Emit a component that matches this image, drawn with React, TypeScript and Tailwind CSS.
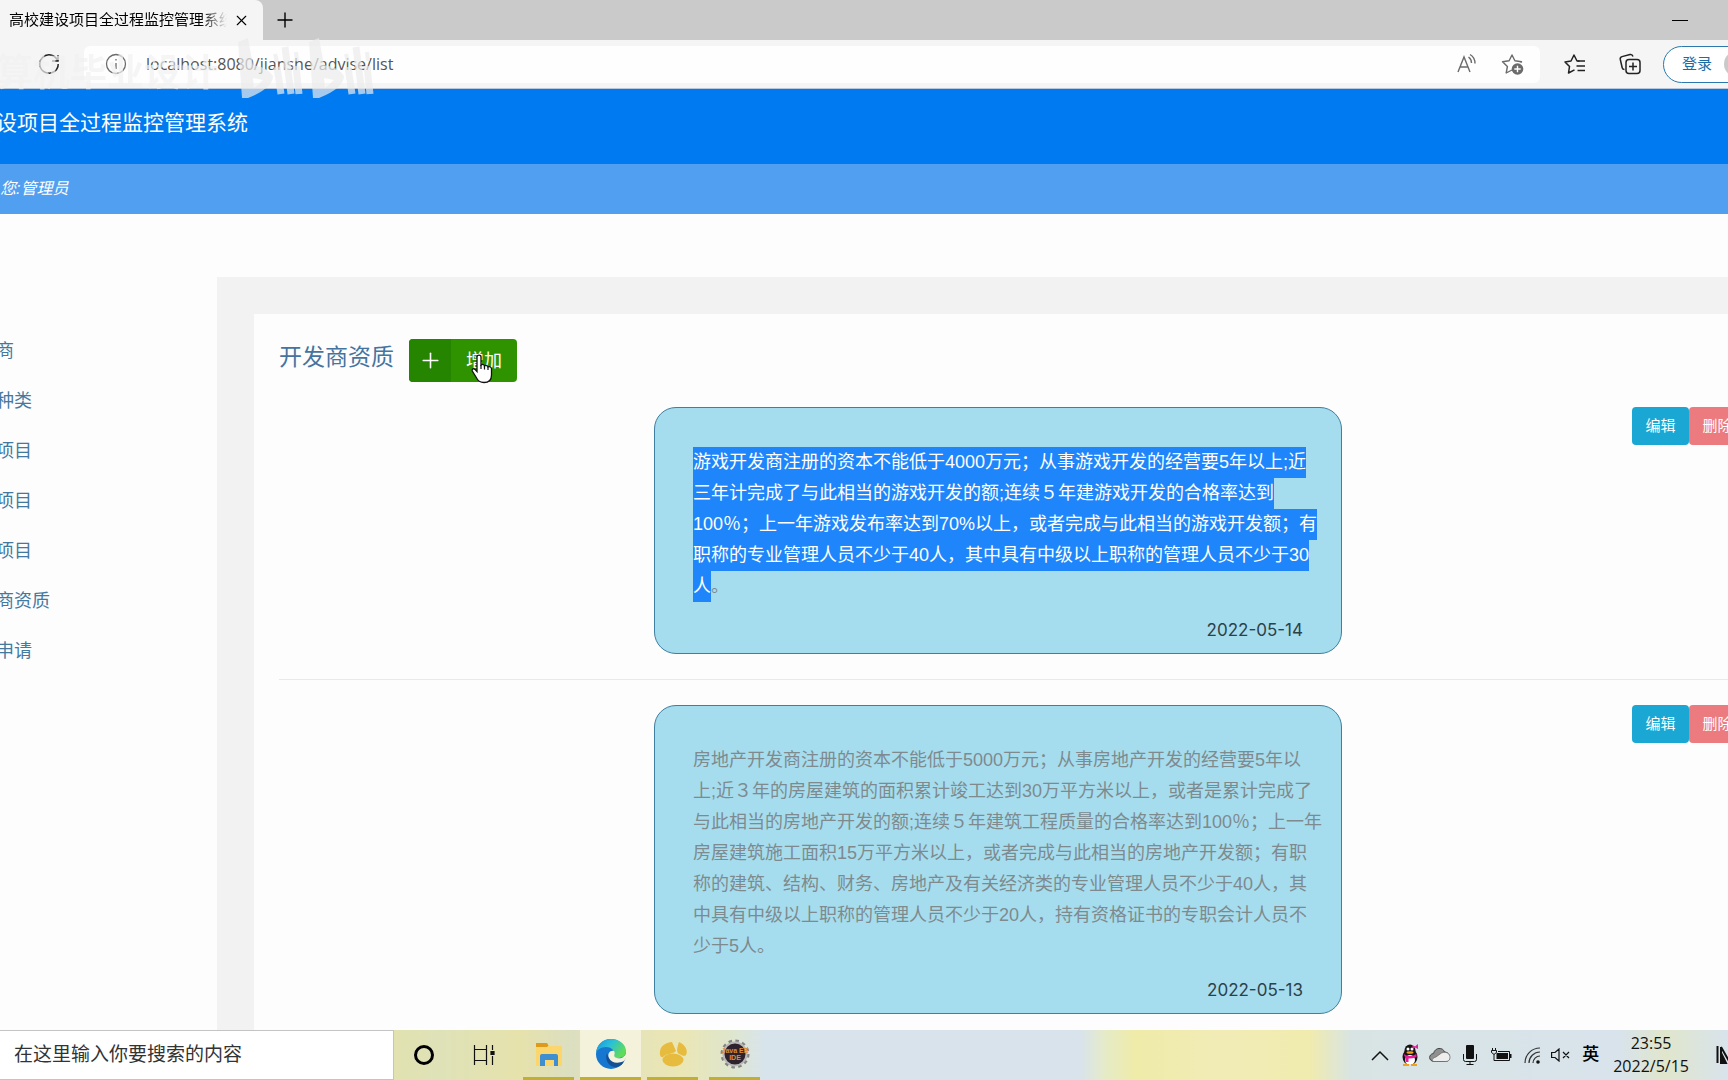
import { Plus, X } from 'lucide-react';

type Advice = {
  date: string;
  lines: string[];
  tail?: string;
  selected?: boolean;
};

const menu = ['商', '种类', '项目', '项目', '项目', '商资质', '申请'];

const advices: Advice[] = [
  {
    date: '2022-05-14',
    selected: true,
    lines: [
      '游戏开发商注册的资本不能低于4000万元；从事游戏开发的经营要5年以上;近',
      '三年计完成了与此相当的游戏开发的额;连续５年建游戏开发的合格率达到',
      '100％；上一年游戏发布率达到70%以上，或者完成与此相当的游戏开发额；有',
      '职称的专业管理人员不少于40人，其中具有中级以上职称的管理人员不少于30',
      '人',
    ],
    tail: '。',
  },
  {
    date: '2022-05-13',
    lines: [
      '房地产开发商注册的资本不能低于5000万元；从事房地产开发的经营要5年以',
      '上;近３年的房屋建筑的面积累计竣工达到30万平方米以上，或者是累计完成了',
      '与此相当的房地产开发的额;连续５年建筑工程质量的合格率达到100％；上一年',
      '房屋建筑施工面积15万平方米以上，或者完成与此相当的房地产开发额；有职',
      '称的建筑、结构、财务、房地产及有关经济类的专业管理人员不少于40人，其',
      '中具有中级以上职称的管理人员不少于20人，持有资格证书的专职会计人员不',
      '少于5人。',
    ],
  },
];

function TabStrip() {
  return (
    <div className="flex h-10 shrink-0 items-center bg-[#cacaca]">
      <div className="flex h-full w-[263px] items-center rounded-tr-lg bg-[#f5f5f5] pl-[9px]">
        <span className="w-[218px] overflow-hidden whitespace-nowrap bg-linear-to-r from-black from-88% to-transparent bg-clip-text text-[15px] text-transparent">
          高校建设项目全过程监控管理系统
        </span>
        <button aria-label="关闭标签页" className="ml-1.5 text-black">
          <X size={17} strokeWidth={1.6} />
        </button>
      </div>
      <button aria-label="新建标签页" className="ml-2.5 text-black">
        <Plus size={24} strokeWidth={1.4} />
      </button>
      <button aria-label="最小化" className="mr-10 ml-auto flex h-6 w-4 items-center">
        <span className="h-px w-full bg-black" />
      </button>
    </div>
  );
}

function Toolbar() {
  return (
    <div className="flex h-[49px] shrink-0 items-center overflow-hidden border-b border-[#b9c8dc] bg-[#f5f5f5]">
      <button aria-label="刷新" className="ml-[38px]">
        <svg width="22" height="22" viewBox="0 0 22 22" fill="none" stroke="#222" strokeWidth="1.5">
          <path d="M19.5 7.5A9.2 9.2 0 1 0 20.2 11" />
          <path d="M20 2v6h-6" />
        </svg>
      </button>
      <div className="ml-6 flex h-[37px] flex-1 items-center rounded-md bg-[#fefefe] pr-4 pl-[21px] text-[#6b6b6b]">
        <svg width="22" height="22" viewBox="0 0 22 22" fill="none" stroke="currentColor" strokeWidth="1.3">
          <circle cx="11" cy="11" r="9.5" />
          <path d="M11 10v6M11 6v1.6" />
        </svg>
        <input
          aria-label="地址栏"
          defaultValue="localhost:8080/jianshe/advise/list"
          className="ml-[19px] min-w-0 flex-1 bg-transparent font-['Open_Sans','Noto_Sans',sans-serif] text-base text-[#555] outline-none"
        />
        <button aria-label="大声朗读" className="mr-[22px]">
          <svg width="22" height="22" viewBox="0 0 22 22" fill="none" stroke="currentColor" strokeWidth="1.4">
            <path d="M2 19L8 4l6 15M4.200 14h7.600" />
            <path d="M12.500 4c2 1.500 3 3.500 3 6M14 1.500c3.500 2 5 5 5 9" />
          </svg>
        </button>
        <button aria-label="添加收藏">
          <svg width="24" height="24" viewBox="0 0 24 24" fill="none" stroke="currentColor" strokeWidth="1.4">
            <path d="M12 18l-5.800 3 1.200-6.500L2.500 9.800l6.600-1L12 3l2.900 5.800 6.600 1-1 1" strokeLinejoin="round" />
            <circle cx="17.500" cy="17" r="5.800" fill="#6b6b6b" stroke="none" />
            <path d="M17.500 13.800v6.400M14.300 17h6.400" stroke="#fff" />
          </svg>
        </button>
      </div>
      <div className="flex items-center text-[#222]">
        <button aria-label="收藏夹" className="ml-[23px]">
          <svg width="24" height="24" viewBox="0 0 24 24" fill="none" stroke="currentColor" strokeWidth="1.500" strokeLinejoin="round">
            <path d="M16.500 9H14l-3-6-3 6-6 .9 4.500 4.600L5.500 21l6-3.200" />
            <path d="M14.500 9H22M13.500 14H22M14.500 18.500H22" />
          </svg>
        </button>
        <button aria-label="集锦" className="ml-[31px]">
          <svg width="24" height="24" viewBox="0 0 24 24" fill="none" stroke="currentColor" strokeWidth="1.500">
            <path d="M6.500 17.500c-1.500 0-2-.6-2.300-1.800L2.300 7.500c-.3-1.500.3-2.500 1.700-2.900l8-2c1.600-.3 2.500.3 3 1.900" />
            <rect x="8" y="7.500" width="14" height="14" rx="3" />
            <path d="M15 10.500v8M11 14.500h8" />
          </svg>
        </button>
        <button className="-mr-5 ml-[21px] flex h-[37px] w-[85px] items-center rounded-full border border-[#2a78ad] bg-white pl-[18px] text-[15px] whitespace-nowrap text-[#1b6ba5]">
          登录
          <span className="ml-3 size-[26px] shrink-0 rounded-full bg-[#c9c9c9]" />
        </button>
      </div>
    </div>
  );
}

function Watermark() {
  return (
    <div className="pointer-events-none absolute top-[38px] left-0 flex opacity-70">
      <span className="-ml-1 pt-4 text-[37px] leading-10 font-bold whitespace-nowrap text-[#f2f2f2]">算机毕业设计</span>
      <svg width="140" height="62" viewBox="0 0 140 62" className="ml-[18px]" fill="none" stroke="#ececec">
        {[0, 71].map((x) => (
          <g key={x} transform={`translate(${x} 0)`}>
            <path d="M2 4L12 0L17 27Q32 29 37 38Q37 50 12 60L6 60Z M17 40L18 50L27 42Z" fill="#ececec" fillRule="evenodd" stroke="none" />
            <path d="M41 29L45 56M49 9L55 56M60 28L63 56" strokeWidth="7" />
            <path d="M39 16L41 24M60 14L61 23" strokeWidth="4" />
          </g>
        ))}
      </svg>
    </div>
  );
}

function AdviceRow({ advice }: { advice: Advice }) {
  return (
    <div className="flex items-start">
      <div className="w-[375px] shrink" />
      <article className="w-[688px] shrink-0 rounded-[22px] border border-[#3f7f9f] bg-[#a5ddee] px-[38px] pt-[39px] pb-[11px]">
        <p className="text-lg leading-[31px] text-[#7f8a8e]">
          {advice.lines.map((line, i) => (
            <span key={i} className="block whitespace-nowrap">
              <span className={advice.selected ? 'inline-block bg-[#1e86fa] text-white' : ''}>{line}</span>
              {i === advice.lines.length - 1 && advice.tail}
            </span>
          ))}
        </p>
        <time className="mt-4 block text-right font-['Inter',sans-serif] text-[17px] leading-6 text-[#2c4149]">
          {advice.date}
        </time>
      </article>
      <div className="-mr-[18px] ml-auto flex text-[15px] leading-[38px] text-white">
        <button className="h-[38px] w-[57px] rounded bg-[#1aa7d3]">编辑</button>
        <button className="h-[38px] w-[57px] rounded bg-[#eb7b7e]">删除</button>
      </div>
    </div>
  );
}

function Cursor() {
  return (
    <svg className="pointer-events-none absolute top-[15px] left-[61px]" width="24" height="30" viewBox="0 0 24 30">
      <path
        d="M7 3c0-2.500 4-2.500 4 0v8c1-1 3.500-.5 3.500 1 1-1 3.300-.5 3.500 1 1.500-.7 3.500 0 3.500 2v6c0 5-3 7.500-7.500 7.500-5 0-6.500-2.500-8-5.500L2.300 17c-.8-2 1.500-3 2.900-1.500L7 17.500z"
        fill="#fff"
        stroke="#111"
        strokeWidth="1.3"
      />
      <path d="M11 11v4M14.500 12v3.500M18 13v3" stroke="#111" strokeWidth="1.2" />
    </svg>
  );
}

function Taskbar() {
  return (
    <footer className="flex h-[50px] shrink-0 items-stretch overflow-hidden bg-[linear-gradient(90deg,#e2e2b0_394px,#dfe2b8_440px,#e6e2ac_520px,#dcdfc0_570px,#ebe6b4_680px,#dfe6cd_730px,#d8e4ec_765px,#d8e3ec_1080px,#e6ebc8_1105px,#efeba9_1135px,#f1ecb6_1220px,#f0ebae_1310px,#d8e4e4_1352px,#d8e3ec_1620px,#e0e6cc_1665px,#d8e3ec_1728px)]">
      <input
        aria-label="搜索"
        placeholder="在这里输入你要搜索的内容"
        className="w-[394px] border border-l-0 border-[#c4c4c4] bg-white pl-3.5 text-[19px] text-black outline-none placeholder:text-[#333]"
      />
      <button aria-label="Cortana" className="flex w-[60px] items-center justify-center">
        <span className="size-5 rounded-full border-[3px] border-black" />
      </button>
      <button aria-label="任务视图" className="flex w-[69px] items-center pl-[19px]">
        <svg width="22" height="20" viewBox="0 0 22 20" fill="none" stroke="#111" strokeWidth="1.200">
          <path d="M1.500 0v4.500h12V0M1.500 20v-4.500h12V20M1.500 4.500v11M13.500 4.500v11M19.500 0v5M19.500 11v9" />
          <path d="M18 6.500h3v3h-3z" fill="#111" />
        </svg>
      </button>
      <button aria-label="文件资源管理器" className="flex w-[51px] items-center justify-center border-b-[3px] border-[#c0b030]">
        <svg width="28" height="26" viewBox="0 0 28 26">
          <path d="M1 2h11l2 3H27v20H1z" fill="#fbd66c" />
          <path d="M1 2h11l1.500 2.500L12 6H1z" fill="#dd9a1c" />
          <path d="M5 25V15q0-2 2-2h14q2 0 2 2v10h-4v-6h-9v6z" fill="#3f8fd0" />
        </svg>
      </button>
      <button aria-label="Microsoft Edge" className="ml-1.5 flex w-[61px] items-center justify-center border-b-[3px] border-[#c0b030] bg-[#f5f2dc]">
        <svg width="30" height="30" viewBox="0 0 30 30">
          <defs>
            <linearGradient id="edgeTop" x1="0" y1="0" x2="1" y2="0.500">
              <stop offset="0" stopColor="#1a8fe0" />
              <stop offset="0.500" stopColor="#2bc0d6" />
              <stop offset="1" stopColor="#62dc58" />
            </linearGradient>
          </defs>
          <circle cx="15" cy="15" r="15" fill="#1577cf" />
          <path d="M0 14C1 5 7 0 15 0c9 0 15 6 15 12 0 5-4 7-8 7-3 0-5-1-4-3C19 11 15 8 10 8 5 8 1 11 0 14z" fill="url(#edgeTop)" />
          <path d="M11 14c-3 8 3 15 10 14 4-1 6-3 7-6-7 3-16 0-17-8z" fill="#134f95" />
          <path d="M18 12c-4-1-7 3-5 7 2 5 9 6 15 3l2-3V14c-1 4-5 6-9 5-3-1-3-2-2.500-3.500.4-1.300.2-2.500-.5-3.500z" fill="#f5f2dc" />
        </svg>
      </button>
      <button aria-label="Navicat" className="ml-1.5 flex w-[51px] items-center justify-center border-b-[3px] border-[#c0b030]">
        <svg width="28" height="26" viewBox="0 0 28 26" fill="#e6bb3e">
          <ellipse cx="14" cy="19" rx="10.500" ry="6.500" />
          <path d="M1 14C0 7 4 2 13 1l4 9C14 13 8 12 4 16q-2 1-3-2z" />
          <path d="M20 1c7 3 9 9 7 13-2 2-4 0-7-1-3-2-2-6 0-12z" />
        </svg>
      </button>
      <button aria-label="Java EE IDE" className="ml-[11px] flex w-[51px] items-center justify-center border-b-[3px] border-[#c0b030]">
        <svg width="30" height="30" viewBox="0 0 30 30">
          <circle cx="15" cy="15" r="12.500" fill="none" stroke="#858585" strokeWidth="4" strokeDasharray="3.300 3.244" />
          <circle cx="15" cy="15" r="11.500" fill="#2e222d" stroke="#b9b9b9" strokeWidth="2" />
          <text x="15" y="14" textAnchor="middle" fontSize="7" fontWeight="bold" fill="#e08c38">Java EE</text>
          <text x="15" y="21" textAnchor="middle" fontSize="7" fontWeight="bold" fill="#e08c38">IDE</text>
        </svg>
      </button>

      <div className="ml-auto flex items-center">
        <svg width="18" height="11" viewBox="0 0 18 11" fill="none" stroke="#111" strokeWidth="1.500">
          <path d="M1 10l8-8 8 8" />
        </svg>
        <svg width="18" height="22" viewBox="0 0 18 22" className="ml-3">
          <ellipse cx="9" cy="13" rx="7.500" ry="8" fill="#151515" />
          <ellipse cx="9" cy="6.500" rx="5.500" ry="6" fill="#151515" />
          <ellipse cx="9" cy="16" rx="5" ry="5" fill="#fff" />
          <circle cx="7" cy="5" r="1.500" fill="#fff" />
          <circle cx="11" cy="5" r="1.500" fill="#fff" />
          <ellipse cx="9" cy="8.500" rx="3.500" ry="1.300" fill="#f3a01c" />
          <path d="M2.500 10q6.500 4 13 0v3q-5 2-8 1.500V18H4.500v-4z" fill="#e91e9a" />
          <path d="M11 1l3 1.500L17 0v5l-3-1.500L12 5z" fill="#e91e9a" />
          <path d="M2 20h6v2H2zM10 20h6v2h-6z" fill="#f3a01c" />
        </svg>
        <svg width="22" height="16" viewBox="0 0 22 16" className="ml-2.5">
          <path d="M5 14.500C-1 14-.5 7 4.500 6.500 6 0 14 0 15.500 5c6 0 7 9 1 9.500z" fill="#909090" stroke="#444" />
          <path d="M5 14.500C2 14 3 11 7 10l5.500-4c5-2 9 1 8.500 5-.5 2.500-2 3.500-4.500 3.500z" fill="#ededed" stroke="#555" strokeWidth=".6" />
        </svg>
        <svg width="14" height="20" viewBox="0 0 14 20" className="ml-3" fill="none" stroke="#111">
          <rect x="3" y="0" width="8" height="14" rx="1" fill="#111" stroke="none" />
          <path d="M.5 9v5.500q0 2 2 2h9q2 0 2-2V9M7 16.500v3M3.500 19.500h7" />
        </svg>
        <svg width="21" height="14" viewBox="0 0 21 14" className="ml-3.5" fill="none" stroke="#111">
          <path d="M1.500 0v2M4.500 0v2M.5 2.500h5v2l-2 1.500h-1l-2-1.500zM3 6v6.500h15.500v-9H7" />
          <path d="M5.500 5H17v6H5.500zM19 6h1.500v4H19z" fill="#111" stroke="none" />
        </svg>
        <svg width="17" height="17" viewBox="0 0 17 17" className="ml-3" fill="none" stroke="#333" strokeWidth="1.200">
          <path d="M1 16A15 15 0 0 1 16 1M5 16A11 11 0 0 1 16 5M9 16a7 7 0 0 1 7-7" />
          <circle cx="14" cy="15" r="1.800" fill="#111" stroke="none" />
        </svg>
        <svg width="19" height="14" viewBox="0 0 19 14" className="ml-2.5" fill="none" stroke="#111" strokeWidth="1.200">
          <path d="M.6 4.500H4L8 1v12L4 9.500H.6zM12 4l6 6M18 4l-6 6" />
        </svg>
        <span className="ml-3 text-[17px] font-medium text-black">英</span>
        <div className="ml-3.5 flex flex-col items-center font-['Open_Sans','Noto_Sans',sans-serif] text-base leading-[23px] text-[#111]">
          <span>23:55</span>
          <span>2022/5/15</span>
        </div>
        <svg width="12" height="22" viewBox="0 0 12 22" className="ml-[27px]">
          <path d="M1.500 2v17M5 3v16M5 3l8 14M5 9l5 10H5z" stroke="#111" strokeWidth="2" fill="#111" />
        </svg>
      </div>
    </footer>
  );
}

export default function App() {
  return (
    <div className="relative flex h-screen flex-col overflow-hidden bg-[#fdfdfd] font-['Liberation_Sans','Noto_Sans_CJK_SC',sans-serif]">
      <TabStrip />
      <Toolbar />
      <header className="shrink-0 text-white">
        <div className="h-[75px] bg-[#007af0] pt-[18px]">
          <h1 className="flex w-[248px] justify-end overflow-hidden text-[21px] leading-[31px] whitespace-nowrap">
            设项目全过程监控管理系统
          </h1>
        </div>
        <div className="flex h-[50px] items-center bg-[#509ff1] text-base italic">您:管理员</div>
      </header>

      <div className="flex min-h-0 flex-1 overflow-hidden">
        <nav className="w-[217px] shrink-0 pt-28">
          {menu.map((item, i) => (
            <a key={i} href="#" className="-ml-1 block text-lg leading-[50px] text-[#44799f]">
              {item}
            </a>
          ))}
        </nav>
        <main className="mt-[63px] min-w-0 flex-1 bg-[#f2f2f2] pt-[37px] pl-[37px]">
          <section className="min-h-full bg-[#fdfdfd] pt-[25px] pl-[25px]">
            <div className="flex h-[43px] items-start">
              <h2 className="text-[23px] leading-9 text-[#44749f]">开发商资质</h2>
              <button className="relative ml-[15px] flex h-[43px] w-[108px] items-center rounded bg-[#2f9300] text-lg text-white">
                <span className="flex h-full w-[42px] items-center justify-center rounded-l bg-[#258500]">
                  <Plus size={25} strokeWidth={1.5} />
                </span>
                <span className="flex-1 pl-[15px] text-left">增加</span>
                <Cursor />
              </button>
            </div>
            <div className="mt-[25px] flex flex-col">
              {advices.map((advice, i) => (
                <div key={advice.date}>
                  {i > 0 && <hr className="my-[25px] border-[#e9e9e9]" />}
                  <AdviceRow advice={advice} />
                </div>
              ))}
            </div>
          </section>
        </main>
      </div>
      <Taskbar />
      <Watermark />
    </div>
  );
}
